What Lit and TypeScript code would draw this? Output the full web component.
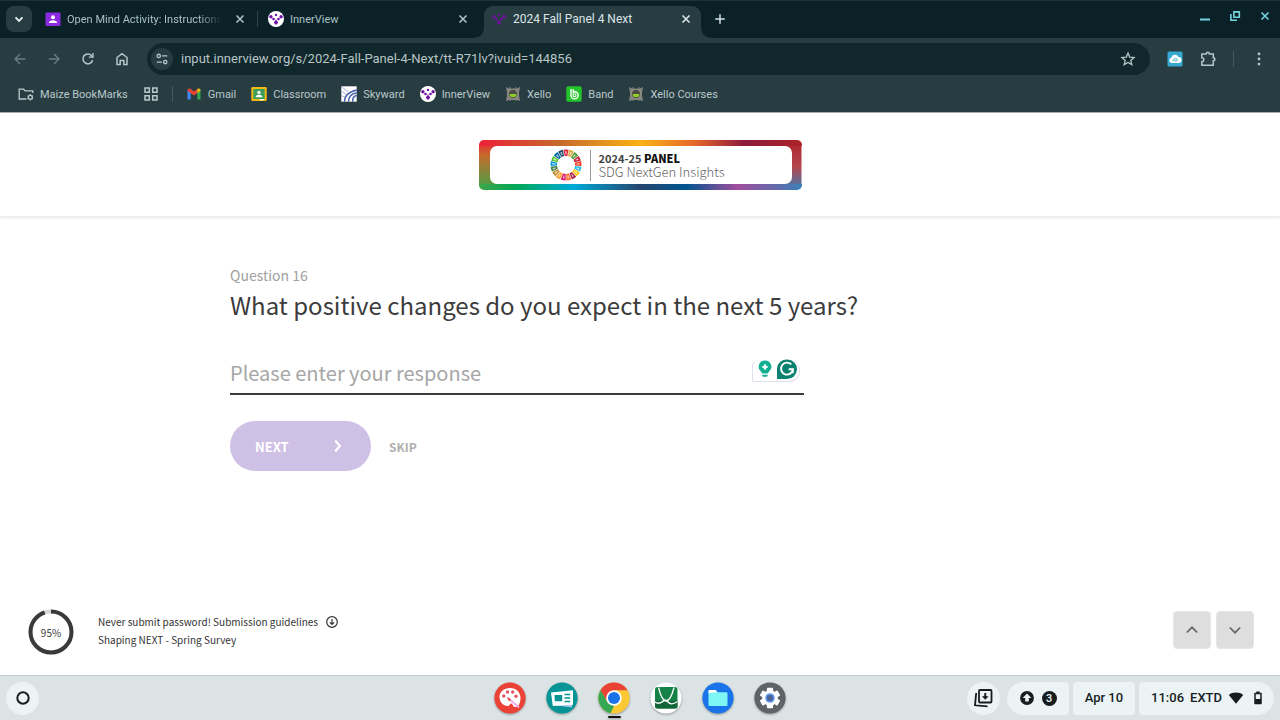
import { LitElement, html, css, svg } from "lit";
import { customElement, property } from "lit/decorators.js";

const innerDots = svg`
  <g fill="#6f13a5">
    <circle cx="2.900" cy="5.800" r="1.700"/><circle cx="13.100" cy="5.800" r="1.700"/>
    <circle cx="8" cy="3.900" r="1.200"/><circle cx="5.500" cy="8" r="1.300"/><circle cx="10.500" cy="8" r="1.300"/>
    <circle cx="8" cy="9.300" r=".8"/><path d="M5.900 10.800h4.200L8 14z"/><circle cx="8" cy="11.600" r="1.800"/>
  </g>`;

const gear = (color: string, hole: string) => svg`
  <g fill=${color}>
    ${[0, 60, 120].map((a) => svg`<rect x="12.9" y="5.8" width="6.2" height="20.4" rx="1" transform="rotate(${a} 16 16)"/>`)}
    <circle cx="16" cy="16" r="7.8"/></g>
  <circle cx="16" cy="16" r="4.8" fill=${hole}/>`;

const xello = svg`
  <path d="M1 1l3 1.500h8L15 1l-1 4v6l1 4-3-1H4l-3 1 1-4V5z" fill="#8b8b86"/>
  <path d="M1 4h2M1 12h2M13 4h2M13 12h2M5 1v2M11 1v2M5 13v2M11 13v2" stroke="#73736f" stroke-width="1.4"/>
  <circle cx="8" cy="8" r="4.200" fill="#4b4d43"/><path d="M4.600 8h6.800a3.400 3.200 0 0 1-6.800 0z" fill="#8fce22"/>`;

const ICONS: Record<string, { box: number; body: unknown }> = {
  down: { box: 16, body: svg`<path d="M4.5 6.3L8 9.8l3.5-3.5" fill="none" stroke="currentColor" stroke-width="1.9"/>` },
  close: { box: 16, body: svg`<path d="M4.5 4.5l7 7M11.5 4.5l-7 7" stroke="currentColor" stroke-width="1.6"/>` },
  plus: { box: 16, body: svg`<path d="M8 3.2v9.6M3.2 8h9.6" stroke="currentColor" stroke-width="1.5"/>` },
  minimize: { box: 16, body: svg`<path d="M3 11.5h10" stroke="currentColor" stroke-width="2"/>` },
  restore: { box: 16, body: svg`<path d="M6.9 3.9h5.4v5.3H6.9zM3.9 6v6.2H10" fill="none" stroke="currentColor" stroke-width="1.6"/>` },
  back: { box: 16, body: svg`<path d="M13.3 8H3.2M8 3L3 8l5 5" fill="none" stroke="currentColor" stroke-width="1.4"/>` },
  forward: { box: 16, body: svg`<path d="M2.7 8h10.1M8 3l5 5-5 5" fill="none" stroke="currentColor" stroke-width="1.4"/>` },
  reload: { box: 16, body: svg`<path d="M12.6 9.2A4.9 4.9 0 1 1 11.6 4.7L13 6.2" fill="none" stroke="currentColor" stroke-width="1.6"/><path d="M13.6 2v4.8H8.8V5.4h3.4V2z" fill="currentColor"/>` },
  home: { box: 16, body: svg`<path d="M3 13.6V6.5l5-3.9 5 3.9v7.1H9.8V9.4H6.2v4.2z" fill="none" stroke="currentColor" stroke-width="1.5"/>` },
  tune: { box: 16, body: svg`<g fill="none" stroke="currentColor" stroke-width="1.5"><circle cx="4.3" cy="4.500" r="1.900"/><path d="M8 4.500h6M2 11.500h6"/><circle cx="11.7" cy="11.500" r="1.900"/></g>` },
  star: { box: 16, body: svg`<path d="M8 2.1l1.7 4 4.4.4-3.3 2.9 1 4.2L8 11.4l-3.8 2.2 1-4.2L1.9 6.5l4.4-.4z" fill="none" stroke="currentColor" stroke-width="1.3"/>` },
  cloud: { box: 16, body: svg`<rect x=".5" y=".5" width="15" height="15" rx="1.6" fill="#35a9d0"/><path d="M4.6 12a2.7 2.7 0 0 1-.3-5.3A3.8 3.8 0 0 1 11.4 6a3 3 0 0 1 .4 6z" fill="#fff"/><path d="M5.8 10.2c0-2.2 3.8-3.6 4.6-1.9.5 1.300-2.900 2.400-3.200 1.200" fill="none" stroke="#35a9d0"/>` },
  puzzle: { box: 16, body: svg`<path d="M1.800 3h4.500c0-2.200 3-2.200 3 0h4v3.700c2.200 0 2.200 3 0 3v4.600H1.800v-3.600c2.600-.2 2.600-3.800 0-4z" fill="none" stroke="currentColor" stroke-width="1.500"/>` },
  more: { box: 16, body: svg`<g fill="currentColor"><circle cx="8" cy="2.900" r="1.400"/><circle cx="8" cy="8" r="1.400"/><circle cx="8" cy="13.100" r="1.400"/></g>` },
  folder: { box: 16, body: svg`<path d="M8.500 13H1.200V3.200h4.500l1.500 1.700h7.600v2.200" fill="none" stroke="currentColor" stroke-width="1.300"/><circle cx="12.300" cy="11.300" r="2" fill="none" stroke="currentColor" stroke-width="1.300"/><path d="M12.300 8v1.200M12.300 13.400v1.200M9.500 9.700l1 .600M14.100 12.300l1 .600M9.500 12.900l1-.600M14.100 10.300l1-.600" stroke="currentColor" stroke-width="1.200"/>` },
  grid: { box: 16, body: svg`<path d="M2 2h4.300v4.300H2zM9.700 2H14v4.300H9.700zM2 9.700h4.300V14H2zM9.700 9.700H14V14H9.700z" fill="none" stroke="currentColor" stroke-width="1.500"/>` },
  person: { box: 16, body: svg`<rect x=".5" y="1.500" width="15" height="13.500" rx="1" fill="#8a2be2"/><circle cx="8" cy="6.300" r="2" fill="#fff"/><path d="M3.800 12c.2-3.600 8.200-3.600 8.400 0z" fill="#fff"/>` },
  innerview: { box: 16, body: svg`<circle cx="8" cy="8" r="8" fill="#fff"/>${innerDots}` },
  innerplain: { box: 16, body: innerDots },
  gmail: { box: 16, body: svg`<path d="M1.500 13.500V4l3.200 2.600v6.900z" fill="#4285f4"/><path d="M11.300 13.500V6.600L14.500 4v9.500z" fill="#34a853"/><path d="M1.500 4.300c0-1.700 1.900-2.400 3.200-1.400L8 5.400l3.300-2.500v4L8 9.500 1.500 4.700z" fill="#ea4335"/><path d="M11.300 2.900c1.300-1 3.200-.3 3.200 1.400v.3l-3.200 2.600z" fill="#fbbc04"/>` },
  classroom: { box: 16, body: svg`<rect x=".3" y="1" width="15.400" height="14" rx="1.300" fill="#f5ba15"/><rect x="2.300" y="3" width="11.400" height="10" fill="#3c9d58"/><circle cx="8" cy="6.500" r="1.700" fill="#fff"/><path d="M4.500 11.300c.2-3.300 6.800-3.300 7 0z" fill="#fff"/><path d="M9 13h4v1.300H9z" fill="#fff"/>` },
  skyward: { box: 16, body: svg`<path d="M.3.300h15.400v15.400H.3z" fill="#fff"/><path d="M3.500 15.700C3.500 11 7 6 15.700 4M7.500 15.700c0-4.500 2.500-8 8.200-9M11.700 15.700c-.3-3.500 1-5.700 4-6.500" fill="none" stroke="#4560a8" stroke-width="1.500"/><path d="M.3 9.500L3.500 11M.5 5l4.500 3.500M1.500 1.500L7.500 6" fill="none" stroke="#a9b5d8"/>` },
  xello: { box: 16, body: xello },
  band: { box: 16, body: svg`<rect x=".3" y=".3" width="15.400" height="15.400" rx="2" fill="#24c52b"/><path d="M5 3v6.500M7.200 3.300v4" stroke="#fff" stroke-width="1.400"/><path d="M5 9.300a3.600 3.600 0 1 0 3.600-3.600H7.200" fill="none" stroke="#fff" stroke-width="1.400"/><circle cx="8.500" cy="9.300" r="1.500" fill="none" stroke="#fff" stroke-width="1.100"/>` },
  chevright: { box: 16, body: svg`<path d="M5.800 3.300l4 4.700-4 4.700" fill="none" stroke="currentColor" stroke-width="2.300" stroke-linecap="round"/>` },
  chevup: { box: 16, body: svg`<path d="M2.800 10.500L8 5.300l5.200 5.200" fill="none" stroke="currentColor" stroke-width="1.700"/>` },
  chevdown: { box: 16, body: svg`<path d="M2.800 5.500L8 10.700l5.200-5.200" fill="none" stroke="currentColor" stroke-width="1.700"/>` },
  circledown: { box: 12, body: svg`<g fill="none" stroke="currentColor" stroke-width="1.200"><circle cx="6" cy="6" r="5.300"/><path d="M6 3v5.300M3.800 6.300L6 8.500l2.200-2.200"/></g>` },
  bulb: { box: 20, body: svg`<path d="M10 1.500a6.300 6.300 0 0 0-4 11.200l1.500 1.800h5l1.500-1.800a6.300 6.300 0 0 0-4-11.200zM7 15.800h6l-1 2H8z" fill="#12b093"/><path d="M10 5.300l.9 1.800 1.800.9-1.800.9-.9 1.800-.9-1.800L7.300 8l1.800-.9z" fill="#fff" stroke="#fff"/>` },
  grammar: { box: 20, body: svg`<path d="M0 20V9.500A10 9.800 0 1 1 10 20z" fill="#0b8170"/><path d="M14.300 5.400A6 6 0 1 0 16 10.200h-4.300M16 10.200l-.3 4" fill="none" stroke="#fff" stroke-width="1.900"/>` },
  launcher: { box: 16, body: svg`<circle cx="8" cy="8" r="5.700" fill="none" stroke="currentColor" stroke-width="2"/>` },
  paint: { box: 32, body: svg`<circle cx="16" cy="16" r="15.600" fill="#ea4335"/><path d="M16 6C9.500 6 5.500 10 5.500 15s4 9 8 9c2.500 0 2-2 3.500-2.500 1.800-.600 1.500 3.500 4.500 3.500 3.500 0 5-5 5-9 0-6-4.500-10-10.500-10z" fill="#fff"/><g fill="#e95462"><circle cx="9.800" cy="14" r="1.700"/><circle cx="13.500" cy="10" r="1.700"/><circle cx="18.700" cy="10" r="1.700"/><circle cx="22" cy="14.200" r="1.700"/></g><path d="M13.500 15.500L25 25.500" stroke="#f3a8e6" stroke-width="1.800"/><path d="M13 15l4 2.500-2 2z" fill="#ea4335"/>` },
  news: { box: 32, body: svg`<circle cx="16" cy="16" r="15.600" fill="#069494"/><path d="M5.500 11l20.500 2.500v12L8.500 23z" fill="#a9c7f5"/><path d="M5 10.500L27 8.300v14.500L6.800 24z" fill="#fff"/><path d="M8.500 13h7.700v6.300H8.800z" fill="#069494"/><path d="M18.500 12.500h5.700M18.500 16h5.700M18.500 19.500h5.700" stroke="#069494" stroke-width="1.600"/>` },
  chrome: { box: 32, body: svg`<circle cx="16" cy="16" r="15.600" fill="#fbc934"/><path d="M2.500 8.200A15.600 15.600 0 0 1 29.500 8.200H16L9.200 19.900z" fill="#ea4335"/><path d="M2.500 8.200l6.750 11.700L16 23.800h.2l-3.800 7.400A15.600 15.600 0 0 1 2.500 8.200z" fill="#34a853"/><circle cx="16" cy="16" r="7.800" fill="#fff"/><circle cx="16" cy="16" r="6" fill="#1a73e8"/>` },
  graph: { box: 32, body: svg`<circle cx="16" cy="16" r="15.600" fill="#fff"/><rect x="5" y="5" width="22.500" height="21.500" rx="2.500" fill="#168248"/><path d="M5 18.500h22.500V24a2.500 2.500 0 0 1-2.500 2.500H7.500A2.500 2.500 0 0 1 5 24z" fill="#126538"/><path d="M8.500 5.500c2 8 4 13.500 7.500 13.500s6-5.500 8-13.500" fill="none" stroke="#fff" stroke-width="1.300"/><path d="M5 20c3 2 5 1.500 7 0s3.500-3 6 0 5 2.500 9.500-.5" fill="none" stroke="#fff" stroke-width="1.500"/>` },
  files: { box: 32, body: svg`<circle cx="16" cy="16" r="15.600" fill="#1a73e8"/><path d="M6.500 9.500c0-1 .5-1.500 1.500-1.500h5.500l2 2.200H24c1 0 1.500.5 1.500 1.500v10.800c0 1-.5 1.500-1.500 1.500H8c-1 0-1.500-.5-1.500-1.500z" fill="#7df6f5"/><path d="M6.500 11V9.500C6.500 8.500 7 8 8 8h5.500l2 2.200z" fill="#fff"/>` },
  settings: { box: 32, body: svg`<circle cx="16" cy="16" r="15.600" fill="#5f6368"/>${gear("#fff", "#669df6")}<circle cx="16" cy="16" r="3.200" fill="#4a6496"/>` },
  holding: { box: 20, body: svg`<g fill="none" stroke="currentColor" stroke-width="1.800"><rect x="6" y="2" width="12.500" height="12.500" rx="1"/><path d="M3.200 5L2 17.300l12.500 1"/></g><path d="M11.300 5h1.900v3.200h2.400l-3.350 3.500L8.900 8.200h2.400z" fill="currentColor"/>` },
  update: { box: 16, body: svg`<circle cx="8" cy="8" r="6.900" fill="currentColor"/><path d="M8 3.500l4.300 4.600H9.800v3.400H6.200V8.100H3.700z" fill="#ebf3f5"/>` },
  wifi: { box: 16, body: svg`<path d="M.8 4.900C4.700 1.700 11.300 1.700 15.200 4.900L8 13.700z" fill="currentColor"/>` },
  battery: { box: 16, body: svg`<path d="M5 3.500h6v10H5z" fill="none" stroke="currentColor" stroke-width="1.500" stroke-linejoin="round"/><path d="M6.300 1.500h3.400V3H6.300zM5 9h6v4.500H5z" fill="currentColor"/>` },
};

@customElement("ui-icon")
export class UiIcon extends LitElement {
  @property() name = "";
  @property({ type: Number }) size = 16;
  static styles = css`
    :host { display: inline-flex; flex: none; }
    svg { display: block; }
  `;
  render() {
    const icon = ICONS[this.name];
    return html`<svg width=${this.size} height=${this.size} viewBox="0 0 ${icon.box} ${icon.box}" aria-hidden="true">${icon.body}</svg>`;
  }
}

const icon = (name: string, size = 16) => html`<ui-icon name=${name} size=${size}></ui-icon>`;

@customElement("browser-chrome")
export class BrowserChrome extends LitElement {
  static styles = css`
    :host { display: block; font-family: Roboto, sans-serif; font-size: 11px; color: #b9c8cb; background: #283d42; border-bottom: 1px solid #a9b3b5; }
    button { font: inherit; color: inherit; background: none; border: 0; padding: 0; display: flex; align-items: center; justify-content: center; }
    a { color: inherit; text-decoration: none; }
    .strip { display: flex; height: 38px; background: #0a2227; border-top: 1px solid #1b3439; box-sizing: border-box; padding-left: 6px; }
    .search { width: 26px; height: 26px; margin: 5px 6px 0 0; border-radius: 8px; background: #283d42; color: #e4eef0; }
    .tab { display: flex; align-items: center; width: 223px; height: 26px; margin-top: 5px; padding: 0 13px 0 7px; box-sizing: border-box; position: relative; color: #a9c0c5; }
    .tab.divided { border-right: 1px solid #2c454b; width: 220px; height: 16px; margin: 10px 3px 0 0; padding-right: 9px; }
    .tab.active { width: 217px; height: 32px; padding: 0 7px 6px; background: #283d42; border-radius: 9px 9px 0 0; color: #dbe5e7; font-size: 12px; }
    .tab.active::before, .tab.active::after { content: ""; position: absolute; bottom: 0; width: 9px; height: 9px; }
    .tab.active::before { right: 100%; background: radial-gradient(circle at 0 0, transparent 8px, #283d42 9px); }
    .tab.active::after { left: 100%; background: radial-gradient(circle at 100% 0, transparent 8px, #283d42 9px); }
    .title { flex: 1; margin: 0 10px 0 6px; white-space: nowrap; overflow: hidden; }
    .title.long { -webkit-mask-image: linear-gradient(90deg, #000 85%, transparent); }
    .new { width: 37px; height: 36px; color: #d5e0e2; }
    .controls { margin-left: auto; display: flex; gap: 14px; padding: 7px 7px 0 0; align-items: start; color: #74d3df; }
    .toolbar { display: flex; align-items: center; height: 42px; padding: 0 13px 0 12px; gap: 17px; color: #b4c6c9; }
    .nav { display: flex; gap: 18px; }
    .dim { color: #687d82; }
    .address { flex: 1; display: flex; align-items: center; height: 32px; padding: 0 14px 0 4px; border-radius: 16px; background: #10282c; }
    .site { width: 22px; height: 22px; border-radius: 11px; background: #283d42; margin-right: 8px; }
    .url { flex: 1; min-width: 0; font: 13px/20px Roboto, sans-serif; color: #b8c4c6; background: none; border: 0; padding: 0; outline: 0; }
    .line { width: 1px; height: 16px; background: #43595e; }
    .bookmarks { display: flex; align-items: center; height: 32px; box-sizing: border-box; padding: 0 18px 4px; gap: 15px; }
    .bookmarks .line { margin: 0 -2px; }
    .bookmarks a { display: flex; align-items: center; gap: 6px; white-space: nowrap; }
  `;
  render() {
    return html`
      <div class="strip">
        <button class="search" aria-label="Search tabs">${icon("down")}</button>
        <div class="tab divided">${icon("person")}<span class="title long">Open Mind Activity: Instructions</span><button aria-label="Close tab">${icon("close")}</button></div>
        <div class="tab">${icon("innerview")}<span class="title">InnerView</span><button aria-label="Close tab">${icon("close")}</button></div>
        <div class="tab active">${icon("innerplain")}<span class="title">2024 Fall Panel 4 Next</span><button aria-label="Close tab">${icon("close")}</button></div>
        <button class="new" aria-label="New tab">${icon("plus")}</button>
        <div class="controls">
          <button aria-label="Minimize">${icon("minimize")}</button>
          <button aria-label="Restore">${icon("restore")}</button>
          <button aria-label="Close window">${icon("close")}</button>
        </div>
      </div>
      <div class="toolbar">
        <div class="nav">
          <button class="dim" aria-label="Back">${icon("back")}</button>
          <button class="dim" aria-label="Forward">${icon("forward")}</button>
          <button aria-label="Reload">${icon("reload")}</button>
          <button aria-label="Home">${icon("home")}</button>
        </div>
        <div class="address">
          <button class="site" aria-label="Site information">${icon("tune", 14)}</button>
          <input class="url" aria-label="Address" value="input.innerview.org/s/2024-Fall-Panel-4-Next/tt-R71lv?ivuid=144856" />
          <button aria-label="Bookmark this page">${icon("star")}</button>
        </div>
        <button aria-label="Cloud extension">${icon("cloud")}</button>
        <button aria-label="Extensions">${icon("puzzle")}</button>
        <span class="line"></span>
        <button aria-label="Menu">${icon("more")}</button>
      </div>
      <nav class="bookmarks">
        <a href="#">${icon("folder")}Maize BookMarks</a>
        <a href="#" aria-label="Apps">${icon("grid")}</a>
        <span class="line"></span>
        ${[["gmail", "Gmail"], ["classroom", "Classroom"], ["skyward", "Skyward"], ["innerview", "InnerView"], ["xello", "Xello"], ["band", "Band"], ["xello", "Xello Courses"]].map(
          ([i, t]) => html`<a href="#">${icon(i)}${t}</a>`
        )}
      </nav>`;
  }
}

const GOALS = ["#e5243b", "#dda63a", "#4c9f38", "#c5192d", "#ff3a21", "#26bde2", "#fcc30b", "#a21942", "#fd6925", "#dd1367", "#fd9d24", "#bf8b2e", "#3f7e44", "#0a97d9", "#56c02b", "#00689d", "#19486a"];

@customElement("survey-page")
export class SurveyPage extends LitElement {
  static styles = css`
    :host { flex: 1; display: flex; flex-direction: column; background: #fff; color: #3c3c3c; font-family: "Noto Sans CJK SC", sans-serif; }
    button { font: inherit; color: inherit; border: 0; padding: 0; display: flex; align-items: center; justify-content: center; }
    header { display: flex; justify-content: center; padding: 27px 0 26px; border-bottom: 1px solid #eee; box-shadow: 0 1px 3px #0000001a; }
    .banner { padding: 6px 10px 6px 11px; border-radius: 5px; background:
      linear-gradient(90deg, #ed2038, #c66a2c 25%, #fbb216 50%, #e5652d 67%, #8d1a3c 82%, #ad2428) 0 0 / 100% 6px no-repeat,
      linear-gradient(90deg, #3fa548, #00a859 12%, #00aad9 29%, #26446f 50%, #00558f 64%, #a14d9e 80%, #3a80b6) 0 100% / 100% 6px no-repeat,
      linear-gradient(#ed2038, #c66a2c 30%, #3fa548) 0 0 / 50% 100% no-repeat,
      linear-gradient(#ad2428, #b34750 55%, #3a80b6) 100% 0 / 50% 100% no-repeat; }
    .plate { display: flex; align-items: center; box-sizing: border-box; width: 302px; height: 38px; padding-left: 60px; border-radius: 7px; background: #fff; }
    .rule { width: 1px; height: 31px; margin: 0 8px; background: #999; }
    .brand { font-size: 11px; line-height: 13px; font-weight: 700; color: #444; }
    .brand b { color: #111; }
    .brand span { display: block; font-size: 13px; font-weight: 300; color: #666; }
    main { box-sizing: border-box; width: 100%; max-width: 820px; margin: 0 auto; padding-top: 48px; }
    .number { margin: 0; font-size: 14px; line-height: 20px; color: #a0a0a0; }
    h1 { margin: 4px 0 0; font-size: 24px; line-height: 32px; font-weight: 400; }
    .field { position: relative; width: 70%; margin-top: 32px; padding-bottom: 2px; border-bottom: 2px solid #3c3c3c; }
    .field input { display: block; box-sizing: border-box; width: 100%; height: 38px; padding: 0 60px 0 0; border: 0; outline: 0; font: 20px/30px "Noto Sans CJK SC", sans-serif; background: none; }
    .field input::placeholder { color: #a6a6a6; opacity: 1; }
    .helper { position: absolute; right: 4px; top: 7px; display: flex; align-items: center; justify-content: flex-end; gap: 2px; width: 48px; height: 22px; box-sizing: border-box; padding: 0 2px 3px 0; border: 1px solid #dfe1ea; border-top: 0; border-radius: 6px 11px 11px 2px; }
    .actions { display: flex; align-items: center; gap: 18px; margin-top: 26px; }
    .next { justify-content: space-between; box-sizing: border-box; width: 141px; height: 50px; padding: 0 25px; border-radius: 25px; background: #cfc0e6; color: #fff; font-size: 13px; font-weight: 700; }
    .skip { background: none; color: #b0b0b0; font-size: 12px; font-weight: 700; }
    footer { display: flex; align-items: center; margin-top: auto; padding: 0 26px 20px 28px; }
    .meter { display: grid; place-items: center; width: 46px; height: 46px; font-size: 10px; }
    .meter > * { grid-area: 1 / 1; }
    .notes { margin: 0 0 2px 24px; font-size: 10px; line-height: 18px; color: #333; }
    .notes p { margin: 0; display: flex; align-items: center; gap: 8px; }
    .pager { display: flex; gap: 5px; margin: 0 0 4px auto; }
    .pager button { width: 38px; height: 38px; border-radius: 4px; background: #dedede; border: 1px solid #e6e6e6; color: #666; }
  `;
  render() {
    return html`
      <header>
        <div class="banner"><div class="plate">
          <svg width="32" height="32" viewBox="-16 -16 32 32" aria-hidden="true">
            ${GOALS.map((c, i) => svg`<g transform="rotate(${(i * 360) / 17})"><path d="M-2.500 -15.300A15.500 15.500 0 0 1 2.500 -15.300L1.400 -9H-1.400Z" fill=${c}/><path d="M-.9 -13.800h1.800L.5 -10.500h-1z" fill="#fff" opacity=".65"/></g>`)}
          </svg>
          <span class="rule"></span>
          <div class="brand">2024-25 <b>PANEL</b><span>SDG NextGen Insights</span></div>
        </div></div>
      </header>
      <main>
        <p class="number">Question 16</p>
        <h1 id="question">What positive changes do you expect in the next 5 years?</h1>
        <div class="field">
          <input type="text" aria-labelledby="question" placeholder="Please enter your response" />
          <span class="helper">${icon("bulb", 20)}${icon("grammar", 20)}</span>
        </div>
        <div class="actions">
          <button class="next">NEXT ${icon("chevright")}</button>
          <button class="skip">SKIP</button>
        </div>
      </main>
      <footer>
        <div class="meter">
          <svg width="46" height="46" viewBox="0 0 46 46" aria-hidden="true">
            <g fill="none" stroke-width="4" transform="rotate(-90 23 23)"><circle cx="23" cy="23" r="20.500" stroke="#d5d5d5"/><circle cx="23" cy="23" r="20.500" stroke="#3a3a3a" pathLength="100" stroke-dasharray="95 5"/></g>
          </svg>
          <span>95%</span>
        </div>
        <div class="notes">
          <p>Never submit password! Submission guidelines ${icon("circledown", 12)}</p>
          <p>Shaping NEXT - Spring Survey</p>
        </div>
        <div class="pager">
          <button aria-label="Previous question">${icon("chevup")}</button>
          <button aria-label="Next question">${icon("chevdown")}</button>
        </div>
      </footer>`;
  }
}

@customElement("system-shelf")
export class SystemShelf extends LitElement {
  static styles = css`
    :host { display: grid; grid-template-columns: 1fr auto 1fr; align-items: center; height: 45px; box-sizing: border-box; padding: 0 6px; border-top: 1px solid #c4ced0; background: #dbe3e5; font: 500 13px/20px Roboto, sans-serif; color: #171d1f; }
    button { font: inherit; color: inherit; border: 0; padding: 0; display: flex; align-items: center; justify-content: center; background: #ebf3f5; height: 33px; }
    .round { width: 33px; border-radius: 17px; }
    .apps { display: flex; gap: 20px; }
    .apps button { width: 32px; height: 32px; border-radius: 16px; background: none; position: relative; filter: drop-shadow(0 1px 1px #0005); }
    .open::after { content: ""; position: absolute; left: 10px; right: 9px; top: 34px; height: 2px; border-radius: 1px; background: #111; }
    .tray { display: flex; justify-content: flex-end; gap: 4px; }
    .tray .round { margin-right: 3px; }
    .pill { border-radius: 4px; padding: 0 12px; gap: 7px; white-space: nowrap; }
    .pill.first { border-radius: 17px 4px 4px 17px; }
    .pill.last { border-radius: 4px 17px 17px 4px; gap: 6px; padding-right: 8px; }
    .count { width: 15px; height: 15px; border-radius: 8px; background: #171d1f; color: #ebf3f5; font-size: 11px; line-height: 15px; }
  `;
  render() {
    return html`
      <div><button class="round" aria-label="Launcher">${icon("launcher")}</button></div>
      <div class="apps">
        ${["paint", "news", "chrome", "graph", "files", "settings"].map(
          (n) => html`<button class=${n === "chrome" ? "open" : ""} aria-label=${n}>${icon(n, 32)}</button>`
        )}
      </div>
      <div class="tray">
        <button class="round" aria-label="Holding space">${icon("holding", 20)}</button>
        <button class="pill first" aria-label="3 notifications">${icon("update")}<span class="count">3</span></button>
        <button class="pill">Apr 10</button>
        <button class="pill last"><span>11:06</span><span>EXTD</span>${icon("wifi")}${icon("battery")}</button>
      </div>`;
  }
}

@customElement("app-root")
export class AppRoot extends LitElement {
  static styles = css`
    :host { display: flex; flex-direction: column; min-height: 100vh; }
  `;
  render() {
    return html`<browser-chrome></browser-chrome><survey-page></survey-page><system-shelf></system-shelf>`;
  }
}
